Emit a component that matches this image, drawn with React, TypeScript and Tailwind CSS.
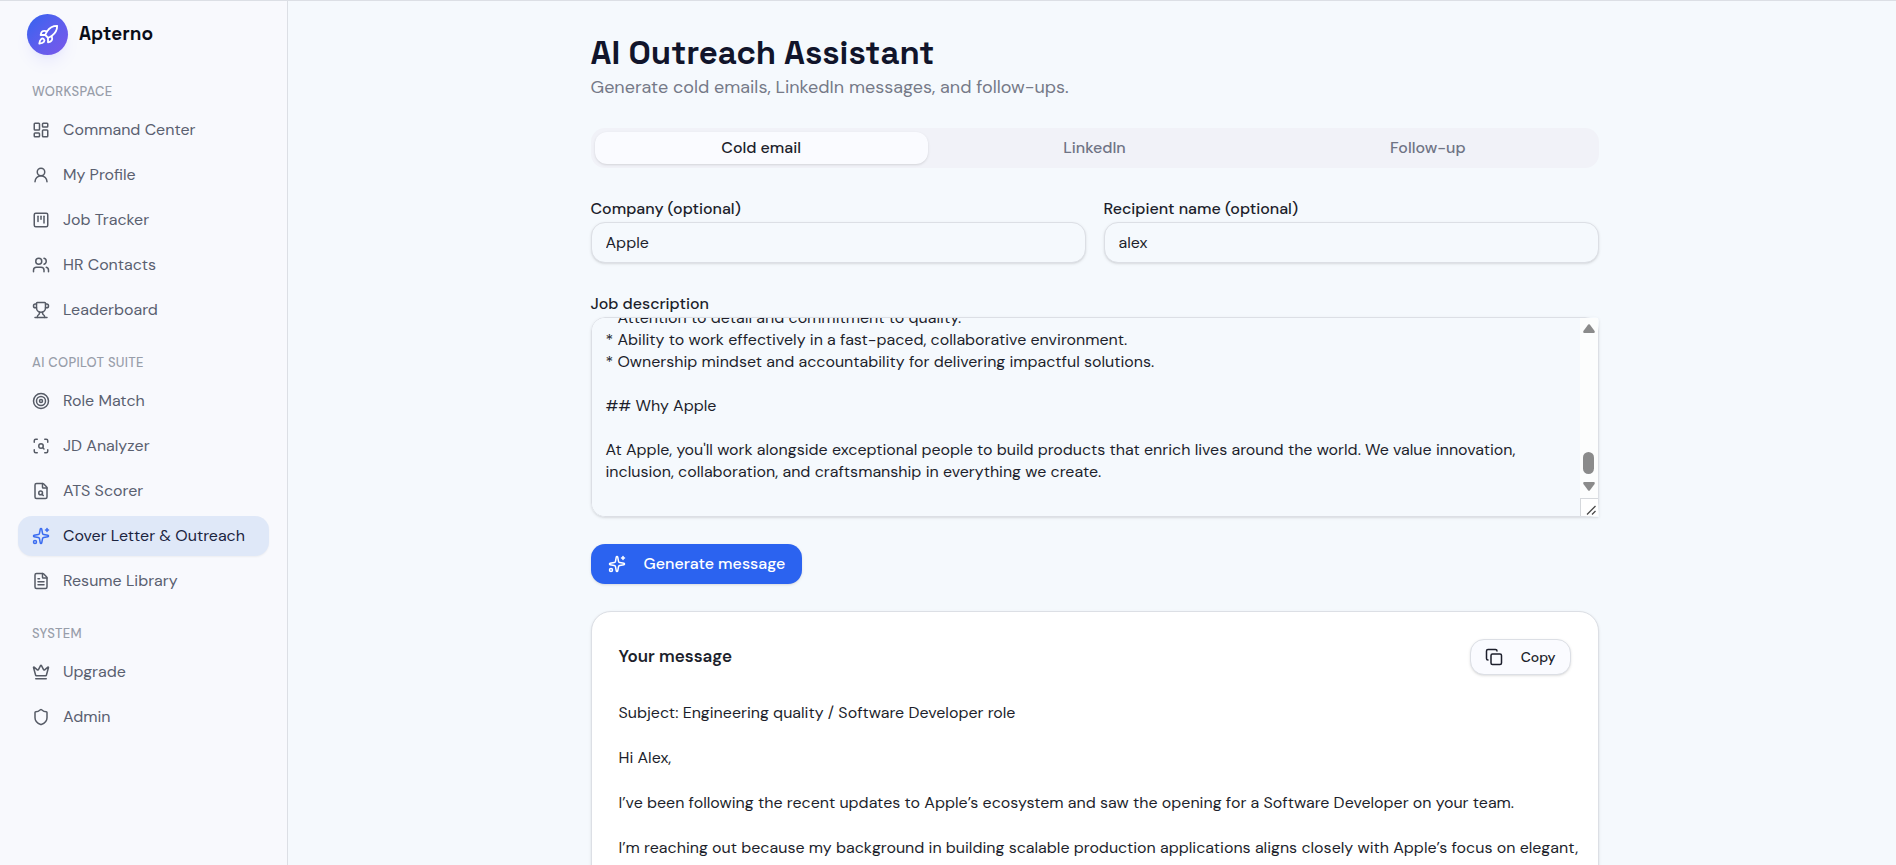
import React, { useEffect, useRef, useState } from 'react';
import {
    Copy, Crown, FileSearch, FileText, LayoutDashboard, Rocket, ScanSearch, Shield,
    Sparkles, SquareKanban, Target, Trophy, UserRound, Users, LucideIcon
} from 'lucide-react';

interface NavItem {
    label: string;
    icon: LucideIcon;
}

const sections: { title: string; items: NavItem[] }[] = [
    {
        title: 'WORKSPACE',
        items: [
            { label: 'Command Center', icon: LayoutDashboard },
            { label: 'My Profile', icon: UserRound },
            { label: 'Job Tracker', icon: SquareKanban },
            { label: 'HR Contacts', icon: Users },
            { label: 'Leaderboard', icon: Trophy },
        ],
    },
    {
        title: 'AI COPILOT SUITE',
        items: [
            { label: 'Role Match', icon: Target },
            { label: 'JD Analyzer', icon: ScanSearch },
            { label: 'ATS Scorer', icon: FileSearch },
            { label: 'Cover Letter & Outreach', icon: Sparkles },
            { label: 'Resume Library', icon: FileText },
        ],
    },
    {
        title: 'SYSTEM',
        items: [
            { label: 'Upgrade', icon: Crown },
            { label: 'Admin', icon: Shield },
        ],
    },
];

const tabs = ['Cold email', 'LinkedIn', 'Follow-up'];

const initialDescription = `* Attention to detail and commitment to quality.
* Ability to work effectively in a fast-paced, collaborative environment.
* Ownership mindset and accountability for delivering impactful solutions.

## Why Apple

At Apple, you'll work alongside exceptional people to build products that enrich lives around the world. We value innovation, inclusion, collaboration, and craftsmanship in everything we create.
`;

const message = [
    'Subject: Engineering quality / Software Developer role',
    'Hi Alex,',
    'I’ve been following the recent updates to Apple’s ecosystem and saw the opening for a Software Developer on your team.',
    'I’m reaching out because my background in building scalable production applications aligns closely with Apple’s focus on elegant, high-performance user experiences and dependable, thoughtfully crafted software.',
];

const Sidebar: React.FC = () => (
    <aside className="w-72 shrink-0 border-r border-[#dcdfe5] bg-[#f8f9fd] px-[18px] pt-[13px]">
        <div className="flex items-center gap-[11px] px-[9px]">
            <div className="flex size-[41px] items-center justify-center rounded-full bg-linear-to-br from-[#2f63f0] to-[#7a57ea] shadow-lg shadow-indigo-500/10">
                <Rocket className="size-[22px] text-white" />
            </div>
            <span className="font-['Space_Grotesk','DM_Sans',sans-serif] text-[19px] font-bold text-[#0a0d18]">Apterno</span>
        </div>
        <nav className="pt-1">
            {sections.map(section => (
                <div key={section.title} className="pt-[25px]">
                    <h2 className="mb-[10px] px-[14px] text-[13px] leading-4 font-medium tracking-wide text-[#989eaa]">{section.title}</h2>
                    <ul className="space-y-[5px]">
                        {section.items.map(({ label, icon: Icon }) => {
                            const active = label === 'Cover Letter & Outreach';
                            return (
                                <li key={label}>
                                    <a
                                        href="#"
                                        aria-current={active ? 'page' : undefined}
                                        className={`flex h-10 items-center gap-[13px] rounded-[14px] px-[14px] ${active ? 'bg-[#dfe8f8] text-[#1b2440] shadow-xs' : 'text-[#5a6070]'}`}
                                    >
                                        <Icon className={`size-[18px] ${active ? 'text-[#3b6cf0]' : 'text-[#565b66]'}`} />
                                        {label}
                                    </a>
                                </li>
                            );
                        })}
                    </ul>
                </div>
            ))}
        </nav>
    </aside>
);

// Scroll indicator and resize grip laid over the right edge of the text area
const ScrollTrack: React.FC = () => (
    <div aria-hidden="true" className="pointer-events-none absolute inset-y-px right-px flex w-[18px] flex-col items-center bg-[#fcfdfd]">
        <svg viewBox="0 0 12 9" className="mt-[6px] h-[9px] w-3 fill-[#8b8b8b]">
            <path d="M5.2.6Q6-.2 6.8.6L11.6 7Q12.2 9 10.8 9H1.2Q-.2 9 .4 7Z" />
        </svg>
        <div className="mt-auto h-[22px] w-[11px] rounded-full bg-[#8b8b8b]" />
        <svg viewBox="0 0 12 9" className="mt-2 mb-[7px] h-[9px] w-3 fill-[#8b8b8b]">
            <path d="M5.2 8.4Q6 9.2 6.8 8.4L11.6 2Q12.2 0 10.8 0H1.2Q-.2 0 .4 2Z" />
        </svg>
        <div className="flex size-[18px] items-end justify-end border-t border-l border-[#d5d8dc] bg-white">
            <svg viewBox="0 0 12 12" className="size-3" fill="none" stroke="#4a4a4a" strokeWidth="1.3">
                <path d="M1 10.5 9.5 2M6 10.5 9.5 7" />
            </svg>
        </div>
    </div>
);

const fieldClass = 'block w-full rounded-[14px] border border-[#dcdfe5] bg-[#f5f9fd] px-[14px] shadow-sm focus:outline-none';

const App: React.FC = () => {
    const [tab, setTab] = useState('Cold email');
    const [company, setCompany] = useState('Apple');
    const [recipient, setRecipient] = useState('alex');
    const [description, setDescription] = useState(initialDescription);
    const descriptionRef = useRef<HTMLTextAreaElement>(null);

    useEffect(() => {
        const el = descriptionRef.current;
        if (el) el.scrollTop = el.scrollHeight;
    }, []);

    return (
        <div className="flex h-screen overflow-hidden border-t border-[#dcdfe5] bg-[#f5f9fd] font-['DM_Sans','Inter',sans-serif] text-base text-[#1d1f2c]">
            <Sidebar />
            <main className="flex-1 overflow-y-auto pl-[5px]">
                <div className="mx-auto max-w-[1008px] pt-8 pb-8">
                    <h1 className="font-['Space_Grotesk','DM_Sans',sans-serif] text-[33px] leading-10 font-bold text-[#11152b]">AI Outreach Assistant</h1>
                    <p className="text-lg leading-7 text-[#757a88]">Generate cold emails, LinkedIn messages, and follow-ups.</p>

                    <div role="tablist" className="mt-[27px] grid grid-cols-3 rounded-[14px] bg-[#f1f2f8] p-1">
                        {tabs.map(name => (
                            <button
                                key={name}
                                role="tab"
                                aria-selected={tab === name}
                                onClick={() => setTab(name)}
                                className={`h-8 rounded-xl font-medium ${tab === name ? 'bg-[#fafbff] shadow-sm' : 'text-[#6f7485]'}`}
                            >
                                {name}
                            </button>
                        ))}
                    </div>

                    <div className="mt-7 grid grid-cols-2 gap-[18px]">
                        <div>
                            <label htmlFor="company" className="block leading-[26px] font-medium">Company (optional)</label>
                            <input id="company" value={company} onChange={e => setCompany(e.target.value)} className={`${fieldClass} h-[41px]`} />
                        </div>
                        <div>
                            <label htmlFor="recipient" className="block leading-[26px] font-medium">Recipient name (optional)</label>
                            <input id="recipient" value={recipient} onChange={e => setRecipient(e.target.value)} className={`${fieldClass} h-[41px]`} />
                        </div>
                    </div>

                    <div className="mt-7">
                        <label htmlFor="description" className="block leading-[26px] font-medium">Job description</label>
                        <div className="relative overflow-hidden rounded-l-[14px] rounded-tr-sm shadow-sm">
                            <textarea
                                id="description"
                                ref={descriptionRef}
                                value={description}
                                onChange={e => setDescription(e.target.value)}
                                className={`${fieldClass} h-[200px] resize-none py-[11px] pr-8 leading-[22px]`}
                            />
                            <ScrollTrack />
                        </div>
                    </div>

                    <button className="mt-[27px] flex h-10 items-center gap-[18px] rounded-[14px] bg-[#2b63f0] px-[17px] font-medium text-white shadow-sm">
                        <Sparkles className="size-[18px]" />
                        Generate message
                    </button>

                    <section className="mt-[27px] rounded-[20px] border border-[#dcdfe5] bg-white p-[27px] shadow-sm">
                        <div className="flex items-center justify-between">
                            <h2 className="text-[17px] font-semibold">Your message</h2>
                            <button className="flex h-9 items-center gap-[18px] rounded-[14px] border border-[#dcdfe5] bg-[#fafbff] px-[14px] text-sm font-medium shadow-sm">
                                <Copy className="size-[18px]" />
                                Copy
                            </button>
                        </div>
                        <div className="-mr-3 mt-[26px] space-y-[22px] leading-[23px]">
                            {message.map(line => <p key={line}>{line}</p>)}
                        </div>
                    </section>
                </div>
            </main>
        </div>
    );
};

export default App;
